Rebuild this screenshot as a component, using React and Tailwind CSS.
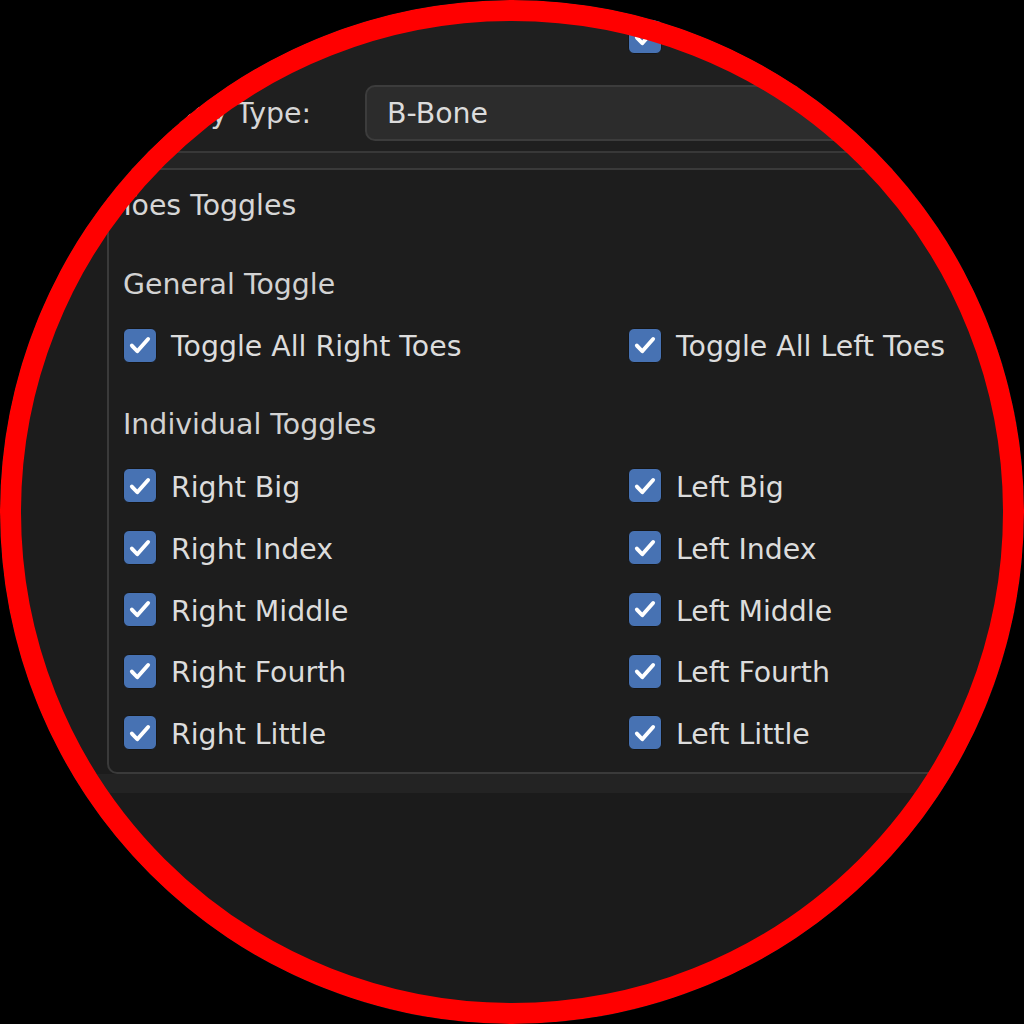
const font = { fontFamily: '"DejaVu Sans", "Liberation Sans", sans-serif' };

function Check() {
  return (
    <div className="flex h-[35px] w-[34px] shrink-0 items-center justify-center rounded-[6px] border border-[#161616] bg-[#4772b3]">
      <svg width="26" height="26" viewBox="0 0 24 24" fill="none">
        <path d="M4.5 12.5 L9.5 17.8 L19.5 6.5" stroke="#ffffff" strokeWidth="3.6" strokeLinecap="round" strokeLinejoin="round" />
      </svg>
    </div>
  );
}

function Toggle({ label }) {
  return (
    <div className="flex h-full items-center gap-[14px]">
      <Check />
      <span className="pt-[5px] text-[28.4px] text-[#dcdcdc]">{label}</span>
    </div>
  );
}

const rows = [
  ['Right Big', 'Left Big'],
  ['Right Index', 'Left Index'],
  ['Right Middle', 'Left Middle'],
  ['Right Fourth', 'Left Fourth'],
  ['Right Little', 'Left Little'],
];

export default function App() {
  return (
    <div className="h-[1024px] w-[1024px] bg-black" style={font}>
      <div className="relative h-[1024px] w-[1024px] overflow-hidden rounded-full">
        <div className="flex h-full w-full flex-col bg-[#1f1f1f]">
          <div className="h-[85px] shrink-0 pl-[628px] pt-[19px]">
            <Check />
          </div>

          <div className="flex h-[56px] shrink-0 items-center">
            <div className="w-[311px] shrink-0 pt-[3px] text-right text-[28.4px] text-[#d6d6d6]">Display Type:</div>
            <div className="ml-[54px] flex h-[56px] w-[640px] items-center rounded-[10px] border-2 border-[#3c3c3c] bg-[#2c2c2c] pl-[20px] pt-[3px] text-[28.4px] text-[#dcdcdc]">
              B-Bone
            </div>
          </div>

          <div className="mt-[10px] h-[2px] shrink-0 bg-[#383838]" />
          <div className="h-[15px] shrink-0 bg-[#242424]" />
          <div className="h-[2px] shrink-0 bg-[#3a3a3a]" />

          <div className="flex shrink-0 bg-[#1c1c1c] pl-[107px]">
            <div className="flex-1 rounded-bl-[10px] border-b-2 border-l-2 border-[#3a3a3a] bg-[#1d1d1d] pb-[8px] pl-[14px]">
              <div className="flex h-[70px] items-center pt-[3px] text-[28.4px] text-[#d6d6d6]">
                <span className="-ml-[4px]">Toes Toggles</span>
              </div>
              <div className="mt-[12px] flex h-[62px] items-center pt-[4px] text-[28.4px] text-[#d2d2d2]">General Toggle</div>
              <div className="grid h-[62px] grid-cols-[505px_1fr]">
                <Toggle label="Toggle All Right Toes" />
                <Toggle label="Toggle All Left Toes" />
              </div>
              <div className="mt-[16px] flex h-[62px] items-center pt-[5px] text-[28.4px] text-[#d2d2d2]">Individual Toggles</div>
              <div className="pt-[1px]">
                {rows.map(([r, l]) => (
                  <div key={r} className="grid h-[61.75px] grid-cols-[505px_1fr]">
                    <Toggle label={r} />
                    <Toggle label={l} />
                  </div>
                ))}
              </div>
            </div>
          </div>

          <div className="h-[19px] shrink-0 bg-[#232323]" />
          <div className="flex-1 bg-[#1b1b1b]" />
        </div>

        <div className="pointer-events-none absolute inset-0 rounded-full border-[21px] border-[#ff0000]" />
      </div>
    </div>
  );
}
